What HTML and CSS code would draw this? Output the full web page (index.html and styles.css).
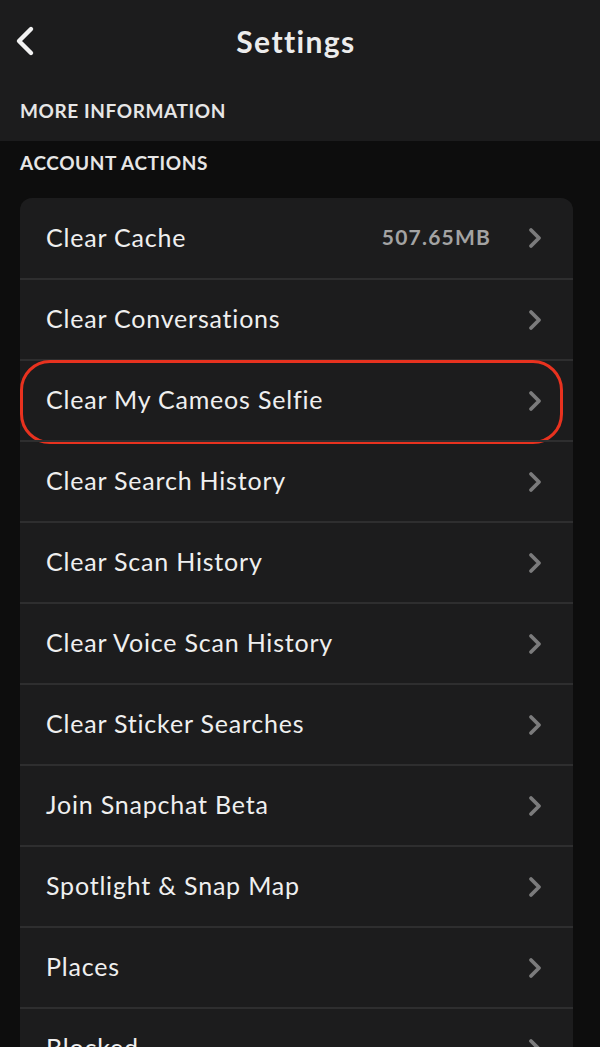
FILE: index.html
```html
<!DOCTYPE html>
<html lang="en">
<head>
<meta charset="utf-8">
<title>Settings</title>
<link rel="stylesheet" href="styles.css">
</head>
<body>
<div class="top">
  <header class="nav">
    <svg class="back" width="24" height="34" viewBox="0 0 24 34"><path d="M19 5 L7 17 L19 29" fill="none" stroke="#f2f2f2" stroke-width="4.4" stroke-linecap="round" stroke-linejoin="round"/></svg>
    <h1 class="title">Settings</h1>
  </header>
  <div class="section-title">MORE INFORMATION</div>
</div>
<main class="content">
  <div class="section-title dark">ACCOUNT ACTIONS</div>
  <ul class="card">
    <li class="row"><span class="label">Clear Cache</span><span class="value">507.65MB</span><svg class="chev" width="16" height="24" viewBox="0 0 16 24"><path d="M4 4 L12 12 L4 20" fill="none" stroke="#7b7b7c" stroke-width="3.8" stroke-linecap="round" stroke-linejoin="round"/></svg></li>
    <li class="row"><span class="label">Clear Conversations</span><svg class="chev" width="16" height="24" viewBox="0 0 16 24"><path d="M4 4 L12 12 L4 20" fill="none" stroke="#7b7b7c" stroke-width="3.8" stroke-linecap="round" stroke-linejoin="round"/></svg></li>
    <li class="row highlighted"><span class="label">Clear My Cameos Selfie</span><svg class="chev" width="16" height="24" viewBox="0 0 16 24"><path d="M4 4 L12 12 L4 20" fill="none" stroke="#7b7b7c" stroke-width="3.8" stroke-linecap="round" stroke-linejoin="round"/></svg><span class="ring"></span></li>
    <li class="row"><span class="label">Clear Search History</span><svg class="chev" width="16" height="24" viewBox="0 0 16 24"><path d="M4 4 L12 12 L4 20" fill="none" stroke="#7b7b7c" stroke-width="3.8" stroke-linecap="round" stroke-linejoin="round"/></svg></li>
    <li class="row"><span class="label">Clear Scan History</span><svg class="chev" width="16" height="24" viewBox="0 0 16 24"><path d="M4 4 L12 12 L4 20" fill="none" stroke="#7b7b7c" stroke-width="3.8" stroke-linecap="round" stroke-linejoin="round"/></svg></li>
    <li class="row"><span class="label">Clear Voice Scan History</span><svg class="chev" width="16" height="24" viewBox="0 0 16 24"><path d="M4 4 L12 12 L4 20" fill="none" stroke="#7b7b7c" stroke-width="3.8" stroke-linecap="round" stroke-linejoin="round"/></svg></li>
    <li class="row"><span class="label">Clear Sticker Searches</span><svg class="chev" width="16" height="24" viewBox="0 0 16 24"><path d="M4 4 L12 12 L4 20" fill="none" stroke="#7b7b7c" stroke-width="3.8" stroke-linecap="round" stroke-linejoin="round"/></svg></li>
    <li class="row"><span class="label">Join Snapchat Beta</span><svg class="chev" width="16" height="24" viewBox="0 0 16 24"><path d="M4 4 L12 12 L4 20" fill="none" stroke="#7b7b7c" stroke-width="3.8" stroke-linecap="round" stroke-linejoin="round"/></svg></li>
    <li class="row"><span class="label">Spotlight &amp; Snap Map</span><svg class="chev" width="16" height="24" viewBox="0 0 16 24"><path d="M4 4 L12 12 L4 20" fill="none" stroke="#7b7b7c" stroke-width="3.8" stroke-linecap="round" stroke-linejoin="round"/></svg></li>
    <li class="row"><span class="label">Places</span><svg class="chev" width="16" height="24" viewBox="0 0 16 24"><path d="M4 4 L12 12 L4 20" fill="none" stroke="#7b7b7c" stroke-width="3.8" stroke-linecap="round" stroke-linejoin="round"/></svg></li>
    <li class="row"><span class="label">Blocked</span><svg class="chev" width="16" height="24" viewBox="0 0 16 24"><path d="M4 4 L12 12 L4 20" fill="none" stroke="#7b7b7c" stroke-width="3.8" stroke-linecap="round" stroke-linejoin="round"/></svg></li>
  </ul>
</main>
</body>
</html>
```
FILE: styles.css
```css
* { box-sizing: border-box; }
html, body { margin: 0; padding: 0; }
body {
  background: #0d0d0d;
  font-family: "Lato", "Open Sans", sans-serif;
  color: #f0f0f0;
  width: 600px;
  height: 1047px;
  overflow: hidden;
}
.top { background: #1c1c1d; }
.nav {
  height: 82px;
  display: flex;
  align-items: center;
  justify-content: center;
  position: relative;
}
.back { position: absolute; left: 12px; top: 24px; }
.title {
  margin: 0;
  font-size: 30px;
  font-weight: 700;
  color: #ececec;
  letter-spacing: 1.4px;
  padding-right: 8px;
}
.section-title {
  height: 59px;
  padding: 17px 0 0 20px;
  font-size: 19px;
  font-weight: 700;
  color: #e6e6e6;
  letter-spacing: 0.6px;
}
.section-title.dark { height: 57px; padding: 10px 0 0 0; }
.content { background: #0d0d0d; padding: 0 27px 0 20px; }
.card {
  list-style: none;
  margin: 0;
  padding: 0;
  background: #1c1c1d;
  border-radius: 12px;
}
.row {
  height: 81px;
  display: flex;
  align-items: center;
  padding: 0 30px 3px 26px;
  border-top: 2px solid #2e2e2f;
  position: relative;
  font-size: 25px;
  color: #efefef;
}
.row:first-child { border-top: none; height: 80px; }
.label { flex: 1; letter-spacing: 0.8px; }
.value {
  color: #a3a3a3;
  font-weight: 700;
  font-size: 21px;
  margin-right: 36px;
  letter-spacing: 1.2px;
}
.chev { flex: none; margin-top: 3px; }
.ring {
  position: absolute;
  left: 0;
  right: 10px;
  top: -1px;
  bottom: -4px;
  border: 3px solid #e8321f;
  border-radius: 30px;
  pointer-events: none;
}
```
